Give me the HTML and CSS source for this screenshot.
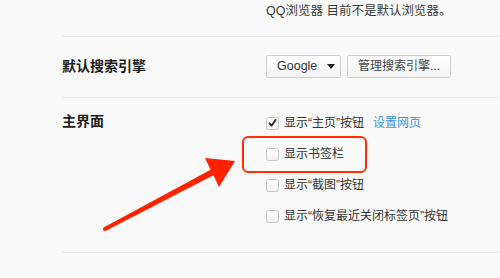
FILE: index.html
```html
<!DOCTYPE html>
<html lang="zh-CN">
<head>
<meta charset="utf-8">
<link rel="stylesheet" href="styles.css">
</head>
<body>
<div class="page">
  <div class="sec sec-top">
    <div class="label"></div>
    <div class="ctl">QQ浏览器 目前不是默认浏览器。</div>
  </div>
  <div class="sec sec-search">
    <div class="label">默认搜索引擎</div>
    <div class="ctl btns">
      <div class="btn select">Google <span class="tri"></span></div>
      <div class="btn manage">管理搜索引擎...</div>
    </div>
  </div>
  <div class="sec sec-main">
    <div class="label">主界面</div>
    <div class="ctl list">
      <div class="row"><span class="cb checked"><svg viewBox="0 0 12 12" width="12" height="12"><path d="M2.8 6.4 L5 8.9 L9.4 2.6" fill="none" stroke="#2a2a2a" stroke-width="2" stroke-linecap="round" stroke-linejoin="round"/></svg></span><span class="txt">显示“主页”按钮</span><span class="link">设置网页</span></div>
      <div class="row"><span class="cb"></span><span class="txt">显示书签栏</span></div>
      <div class="row"><span class="cb"></span><span class="txt">显示“截图”按钮</span></div>
      <div class="row"><span class="cb"></span><span class="txt">显示“恢复最近关闭标签页”按钮</span></div>
    </div>
  </div>
  <div class="highlight"></div>
  <svg class="arrow" viewBox="0 0 500 278" width="500" height="278">
    <polygon points="104.1,227.2 210.6,169.8 205,158 235,161 219,187 213.4,175.2 105.9,230.8" fill="#ff2200"/>
    <circle cx="105" cy="229" r="2.1" fill="#ff2200"/>
  </svg>
</div>
</body>
</html>
```
FILE: styles.css
```css
html, body {
  margin: 0;
  padding: 0;
  background: #f9f9f9;
}
.page {
  position: relative;
  width: 500px;
  height: 278px;
  overflow: hidden;
  font-family: "Liberation Sans", "Noto Sans CJK SC", sans-serif;
  font-size: 13px;
  color: #333;
}
.sec {
  display: flex;
  margin-left: 62px;
  border-bottom: 1px solid #e8e8e8;
}
.label {
  width: 204px;
  flex: none;
  font-size: 14px;
  font-weight: bold;
  color: #1c1c1c;
  line-height: 16px;
}
.ctl {
  flex: 1;
  line-height: 16px;
}
.sec-top {
  padding-top: 3px;
  box-sizing: border-box;
  height: 37px;
}
.sec-top .ctl {
  color: #3a3a3a;
  font-size: 12.5px;
}
.sec-search {
  height: 61px;
  align-items: center;
  box-sizing: border-box;
  padding-bottom: 2px;
}
.btns {
  display: flex;
  gap: 6px;
}
.btn {
  height: 23px;
  box-sizing: border-box;
  border: 1px solid #cfcfcf;
  border-radius: 2px;
  background: linear-gradient(#ffffff, #f3f3f3);
  display: flex;
  align-items: center;
  color: #444;
  font-size: 12px;
}
.select {
  width: 75px;
  padding-left: 10px;
  font-family: "Liberation Sans", sans-serif;
  font-size: 12.5px;
  color: #333;
}
.tri {
  width: 0;
  height: 0;
  border-left: 4px solid transparent;
  border-right: 4px solid transparent;
  border-top: 5px solid #222;
  margin-left: 10px;
}
.manage {
  width: 104px;
  padding-left: 10px;
  color: #444;
}
.sec-main {
  padding-top: 15px;
  padding-bottom: 26px;
}
.list {
  display: flex;
  flex-direction: column;
  gap: 11px;
  font-size: 12px;
}
.row {
  display: flex;
  align-items: center;
  height: 20px;
}
.cb {
  width: 13px;
  height: 13px;
  box-sizing: border-box;
  border: 1px solid #c6c6c6;
  border-radius: 2.5px;
  background: linear-gradient(#ffffff, #f1f1f1);
  margin-right: 5px;
  display: flex;
  align-items: center;
  justify-content: center;
  flex: none;
}
.cb svg {
  display: block;
}
.txt {
  color: #333;
}
.link {
  color: #3a8fe0;
  margin-left: 9px;
}
.highlight {
  position: absolute;
  left: 242px;
  top: 136px;
  width: 125px;
  height: 37px;
  box-sizing: border-box;
  border: 2.5px solid #ff2d0a;
  border-radius: 6px;
}
.arrow {
  position: absolute;
  left: 0;
  top: 0;
}
```
